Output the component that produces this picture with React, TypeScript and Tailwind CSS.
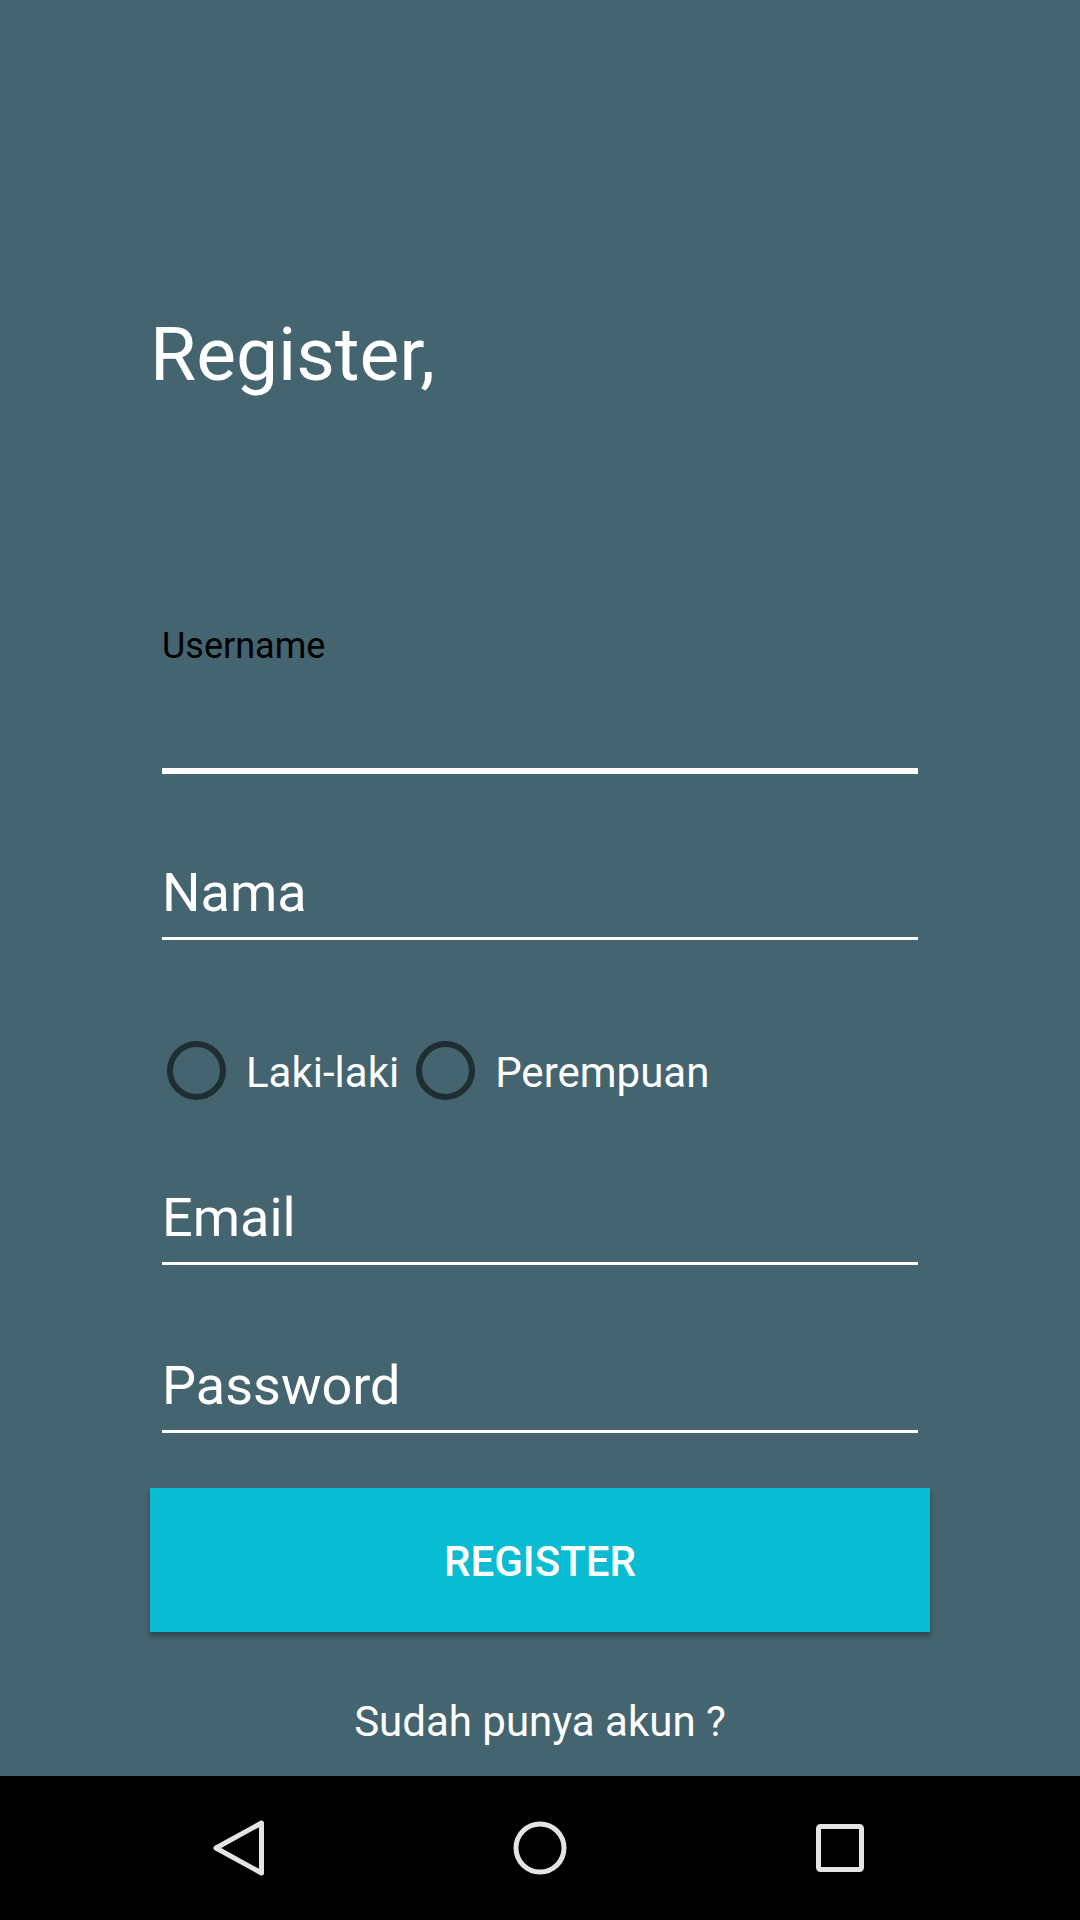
import { FC } from 'react'

const fields = ['Email', 'Password']

const Field: FC<{ label: string; className: string }> = ({ label, className }) => (
    <div className={className}>
        <div className="text-[54px] leading-none text-white">{label}</div>
        <div className="mt-[17px] h-[3px] bg-white" />
    </div>
)

const Radio: FC<{ label: string; className?: string }> = ({ label, className }) => (
    <div className={'flex items-center ' + (className || '')}>
        <span className="w-[59px] h-[59px] rounded-full border-[6px] border-[#1e2e34]" />
        <span className="ml-[20px] pt-[4px] text-[42px] leading-none text-white">{label}</span>
    </div>
)

const App: FC = () => {
    return (
        <div className="w-[1080px] h-[1920px] flex flex-col bg-[#446470] font-[Roboto,sans-serif]">
            <main className="flex-1 flex flex-col">
                <h1 className="mt-[317px] ml-[150px] text-[75px] leading-none font-normal text-white">Register,</h1>

                <div className="ml-[162px] w-[756px] flex flex-col">
                    {/* focused username field */}
                    <div className="mt-[236px]">
                        <div className="text-[36px] leading-none text-black">Username</div>
                        <div className="mt-[104px] h-[6px] bg-white" />
                    </div>

                    <Field label="Nama" className="mt-[92px]" />

                    <div className="mt-[101px] h-[59px] flex items-center">
                        <Radio label="Laki-laki" className="ml-[5px]" />
                        <Radio label="Perempuan" className="ml-[17px]" />
                    </div>

                    <Field label={fields[0]} className="mt-[91px]" />
                    <Field label={fields[1]} className="mt-[94px]" />
                </div>

                <button
                    type="button"
                    className="mt-[55px] ml-[150px] w-[780px] h-[144px] pt-[4px] bg-[#09bcd2] text-white text-[42px] leading-none font-medium shadow-[0_4px_5px_rgba(0,0,0,0.3)]"
                >
                    REGISTER
                </button>

                <p className="mt-[69px] text-center text-[42px] leading-none text-white">Sudah punya akun ?</p>
            </main>

            <nav className="h-[144px] bg-black flex items-center px-[90px]">
                <div className="flex-1 flex justify-center">
                    <svg width="60" height="60" viewBox="0 0 60 60" fill="none" stroke="#e4e4e4" strokeWidth="5" strokeLinejoin="round">
                        <path d="M6 30 L51.5 5 L51.5 55 Z" />
                    </svg>
                </div>
                <div className="flex-1 flex justify-center">
                    <svg width="60" height="60" viewBox="0 0 60 60" fill="none" stroke="#e4e4e4" strokeWidth="5">
                        <circle cx="30" cy="30" r="24" />
                    </svg>
                </div>
                <div className="flex-1 flex justify-center">
                    <svg width="60" height="60" viewBox="0 0 60 60" fill="none" stroke="#e4e4e4" strokeWidth="5">
                        <rect x="8.5" y="8.5" width="43" height="43" rx="2" />
                    </svg>
                </div>
            </nav>
        </div>
    )
}

export default App
